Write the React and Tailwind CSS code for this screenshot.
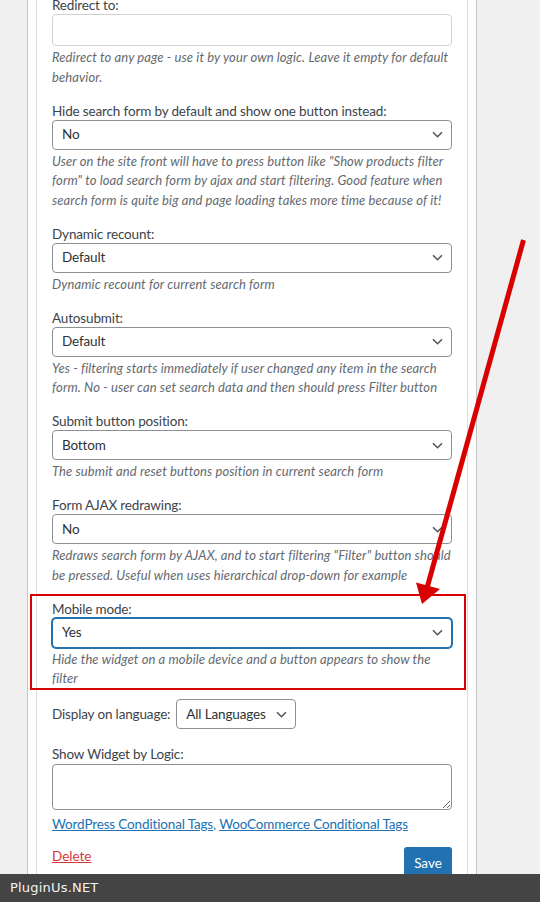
import React from 'react';
import clsx from 'clsx';

const FONT = { fontFamily: 'Lato, "Open Sans", sans-serif' };

const Chevron = () => (
  <svg width="11" height="7" viewBox="0 0 11 7" className="shrink-0">
    <path d="M1 1.2l4.5 4.5 4.5-4.5" fill="none" stroke="#50575e" strokeWidth="1.6" />
  </svg>
);

const Select = ({ value, focused, className }) => (
  <div
    className={clsx(
      'flex h-[30px] items-center justify-between rounded-[4px] border bg-white pl-[9px] pr-[8px] text-[13.5px] tracking-[-0.15px] text-[#2c3338]',
      focused ? 'border-[#2271b1] shadow-[0_0_0_1px_#2271b1]' : 'border-[#8c8f94]',
      className
    )}
  >
    <span className="whitespace-nowrap">{value}</span>
    <Chevron />
  </div>
);

const Field = ({ label, value, desc, focused }) => (
  <div className="mb-[14.5px]">
    <div className="text-[13.5px] leading-[18px] tracking-[-0.15px] text-[#3c434a]">{label}</div>
    <Select value={value} focused={focused} />
    <p className="mt-[2px] text-[13px] italic leading-[19.5px] tracking-[0.1px] text-[#646970]">{desc}</p>
  </div>
);

const fields = [
  {
    label: 'Hide search form by default and show one button instead:',
    value: 'No',
    desc: 'User on the site front will have to press button like "Show products filter form" to load search form by ajax and start filtering. Good feature when search form is quite big and page loading takes more time because of it!',
  },
  {
    label: 'Dynamic recount:',
    value: 'Default',
    desc: 'Dynamic recount for current search form',
  },
  {
    label: 'Autosubmit:',
    value: 'Default',
    desc: 'Yes - filtering starts immediately if user changed any item in the search form. No - user can set search data and then should press Filter button',
  },
  {
    label: 'Submit button position:',
    value: 'Bottom',
    desc: 'The submit and reset buttons position in current search form',
  },
  {
    label: 'Form AJAX redrawing:',
    value: 'No',
    desc: 'Redraws search form by AJAX, and to start filtering "Filter" button should be pressed. Useful when uses hierarchical drop-down for example',
  },
  {
    label: 'Mobile mode:',
    value: 'Yes',
    focused: true,
    desc: 'Hide the widget on a mobile device and a button appears to show the filter',
  },
];

export default function App() {
  return (
    <div className="relative h-[902px] w-[540px] overflow-hidden bg-[#f0f0f1]" style={FONT}>
      {/* widget panel */}
      <div className="ml-[27px] h-full w-[450px] border-x border-[#c3c4c7] bg-white px-[8px]">
        <div className="h-full border-x border-[#dcdcde] px-[15px]">
          <div className="-mt-[3px]">
            {/* Redirect */}
            <div className="mb-[14.5px]">
              <div className="text-[13.5px] leading-[17px] tracking-[-0.15px] text-[#3c434a]">Redirect to:</div>
              <input className="block h-[32px] w-full rounded-[4px] border border-[#d0d1d3] bg-white" />
              <p className="mt-[2px] text-[13px] italic leading-[19.5px] tracking-[0.1px] text-[#646970]">
                Redirect to any page - use it by your own logic. Leave it empty for default behavior.
              </p>
            </div>

            {fields.map((f) => (
              <Field key={f.label} {...f} />
            ))}

            {/* Language */}
            <div className="-mt-[4px] flex items-center gap-[6px]">
              <span className="text-[13.5px] tracking-[-0.15px] text-[#3c434a]">Display on language:</span>
              <Select value="All Languages" className="w-[120px] gap-2" />
            </div>

            {/* Logic */}
            <div className="mt-[16px] text-[13.5px] leading-[18px] tracking-[-0.15px] text-[#3c434a]">Show Widget by Logic:</div>
            <textarea className="mt-[1px] block h-[46px] w-full rounded-[4px] border border-[#8c8f94] bg-white" />
            <div className="mt-[4px] text-[13.5px] leading-[20px] tracking-[-0.15px] text-[#2271b1]">
              <a className="underline" href="#">WordPress Conditional Tags</a>,{' '}
              <a className="underline" href="#">WooCommerce Conditional Tags</a>
            </div>

            <div className="mt-[13px] flex items-start justify-between">
              <a className="text-[13.5px] leading-[18px] text-[#d63638] underline" href="#">Delete</a>
              <button className="h-[32px] w-[48px] rounded-[3px] bg-[#2271b1] text-[13.5px] text-white">Save</button>
            </div>
          </div>
        </div>
      </div>

      {/* annotation: red box around mobile mode */}
      <div className="absolute left-[30px] top-[594px] h-[96px] w-[436px] border-2 border-[#d80000]" />

      {/* annotation: arrow */}
      <svg className="absolute left-0 top-0" width="540" height="902">
        <line x1="523.5" y1="240" x2="427" y2="588" stroke="#d80000" strokeWidth="5" />
        <polygon points="422,604 416,582.5 440,589" fill="#d80000" />
      </svg>

      {/* watermark bar */}
      <div className="absolute inset-x-0 bottom-0 flex h-[28px] items-center bg-[#444444] pl-[10px]">
        <span className="text-[13px] tracking-[0.2px] text-[#f4f4f4]" style={{ fontFamily: '"DejaVu Sans", sans-serif' }}>
          PluginUs.NET
        </span>
      </div>
    </div>
  );
}
